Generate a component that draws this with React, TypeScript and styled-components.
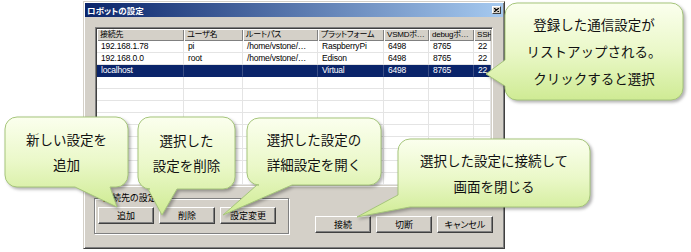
import React from "react";
import styled, { createGlobalStyle } from "styled-components";

const UI_FONT = `"Liberation Sans", "Noto Sans CJK JP", sans-serif`;
const JP_FONT = `"Noto Sans CJK JP", sans-serif`;

const GlobalStyle = createGlobalStyle`
  html, body {
    margin: 0;
    padding: 0;
    background: #fff;
  }
  body {
    width: 691px;
    height: 252px;
    overflow: hidden;
  }
`;

const Page = styled.div`
  position: relative;
  width: 691px;
  height: 252px;
  box-sizing: border-box;
  padding: 1px 0 0 83px;
  font-family: ${UI_FONT};
`;

const Dialog = styled.div`
  width: 422px;
  box-sizing: border-box;
  background: #d4d0c8;
  border: 1px solid;
  border-color: #d4d0c8 #404040 #404040 #d4d0c8;
  box-shadow: inset 1px 1px 0 #fff, inset -1px -1px 0 #808080;
  padding: 1px;
  display: flex;
  flex-direction: column;
`;

const TitleBar = styled.div`
  height: 14px;
  display: flex;
  align-items: center;
  justify-content: space-between;
  padding: 0 2px;
  background: linear-gradient(to right, #0a246a, #a6caf0);
`;

const TitleText = styled.span`
  color: #fff;
  font-family: ${JP_FONT};
  font-weight: bold;
  font-size: 8.5px;
  font-feature-settings: "palt";
`;

const CloseButton = styled.span`
  width: 9px;
  height: 8px;
  box-sizing: border-box;
  background: #d4d0c8;
  border: 1px solid;
  border-color: #fff #404040 #404040 #fff;
  display: flex;
  align-items: center;
  justify-content: center;
`;

const Body = styled.div`
  padding: 10px 10px 13px 10px;
  display: flex;
  flex-direction: column;
  gap: 11px;
`;

const ListView = styled.div`
  height: 160px;
  box-sizing: border-box;
  background: #fff;
  border: 1px solid;
  border-color: #808080 #fff #fff #808080;
  box-shadow: inset 1px 1px 0 #404040, inset -1px -1px 0 #d4d0c8;
  padding: 1px;
  overflow: hidden;
`;

const Grid = styled.div`
  display: grid;
  grid-template-columns: 87px 59px 75px 66px 45px 45px 1fr;
  grid-auto-rows: 12px;
`;

const HeadCell = styled.div`
  box-sizing: border-box;
  background: #d4d0c8;
  box-shadow: inset 1px 1px 0 #fff, inset -1px -1px 0 #808080;
  padding-left: 3px;
  font-family: ${UI_FONT};
  font-feature-settings: "palt";
  font-size: 8px;
  letter-spacing: -0.2px;
  line-height: 12px;
  color: #000;
  white-space: nowrap;
  overflow: hidden;
`;

const Cell = styled.div<{ $selected?: boolean }>`
  box-sizing: border-box;
  background: ${(p) => (p.$selected ? "#0a246a" : "#fff")};
  color: ${(p) => (p.$selected ? "#fff" : "#000")};
  border-right: 1px solid ${(p) => (p.$selected ? "#3b4f86" : "#e4e4e4")};
  border-bottom: 1px solid ${(p) => (p.$selected ? "#0a246a" : "#e4e4e4")};
  padding-left: 4px;
  font-size: 8.5px;
  letter-spacing: -0.2px;
  line-height: 11px;
  white-space: nowrap;
  overflow: hidden;
`;

const Footer = styled.div`
  display: flex;
  justify-content: space-between;
  align-items: flex-end;
`;

const GroupBox = styled.div`
  position: relative;
  margin-left: -1px;
  width: 195px;
  height: 36px;
  box-sizing: border-box;
  border: 1px solid #808080;
  box-shadow: inset 1px 1px 0 #fff, 1px 1px 0 #fff;
  padding: 8px 0 0 3px;
  display: flex;
  gap: 5px;
`;

const GroupLabel = styled.span`
  position: absolute;
  top: -7px;
  left: 7px;
  padding: 0 1px;
  background: #d4d0c8;
  font-family: ${JP_FONT};
  font-feature-settings: "palt";
  font-size: 9px;
  line-height: 12px;
  color: #000;
`;

const ButtonRow = styled.div`
  display: flex;
  gap: 5px;
  margin-bottom: 1px;
`;

const Button = styled.button`
  width: 56px;
  height: 17px;
  box-sizing: border-box;
  margin: 0;
  padding: 0;
  background: #d4d0c8;
  border: 1px solid;
  border-color: #fff #404040 #404040 #fff;
  box-shadow: inset -1px -1px 0 #808080;
  font-family: ${JP_FONT};
  font-feature-settings: "palt";
  font-size: 9px;
  line-height: 1;
  color: #000;
`;

type Tail =
  | { edge: "left"; from: number; to: number; tip: [number, number] }
  | { edge: "bottom"; from: number; to: number; tip: [number, number] }
  | { edge: "corner"; x: number; y: number; tip: [number, number] };

// rounded box with a pointer, drawn clockwise from the top-left corner
function bubblePath(w: number, h: number, r: number, t: Tail) {
  const arc = `A ${r} ${r} 0 0 1`;
  const tip = `${t.tip[0]} ${t.tip[1]}`;
  let d = `M ${r} 0 H ${w - r} ${arc} ${w} ${r} V ${h - r} ${arc} ${w - r} ${h}`;
  if (t.edge === "bottom") {
    d += ` H ${t.to} L ${tip} L ${t.from} ${h} H ${r} ${arc} 0 ${h - r}`;
  } else if (t.edge === "corner") {
    d += ` H ${t.x} L ${tip} L 0 ${t.y}`;
  } else {
    d += ` H ${r} ${arc} 0 ${h - r}`;
  }
  if (t.edge === "left") {
    d += ` V ${t.to} L ${tip} L 0 ${t.from}`;
  }
  d += ` V ${r} ${arc} ${r} 0 Z`;
  return d;
}

const BubbleWrap = styled.div<{ $x: number; $y: number; $w: number; $h: number }>`
  position: absolute;
  left: ${(p) => p.$x}px;
  top: ${(p) => p.$y}px;
  width: ${(p) => p.$w}px;
  height: ${(p) => p.$h}px;
`;

const BubbleShape = styled.svg`
  position: absolute;
  left: 0;
  top: 0;
  overflow: visible;
  filter: drop-shadow(2px 2px 1.5px rgba(0, 0, 0, 0.3));
`;

const BubbleText = styled.div<{ $lh: number }>`
  position: relative;
  height: 100%;
  display: flex;
  flex-direction: column;
  align-items: center;
  justify-content: center;
  font-family: ${JP_FONT};
  font-size: 13.5px;
  line-height: ${(p) => p.$lh}px;
  color: #111;
  white-space: nowrap;
`;

type Note = {
  id: string;
  x: number;
  y: number;
  w: number;
  h: number;
  lh: number;
  tail: Tail;
  lines: string[];
};

const notes: Note[] = [
  {
    id: "list",
    x: 505, y: 3, w: 178, h: 97, lh: 27,
    tail: { edge: "left", from: 57, to: 83, tip: [-19, 71] },
    lines: ["登録した通信設定が", "リストアップされる。", "クリックすると選択"],
  },
  {
    id: "add",
    x: 5, y: 117, w: 123, h: 70, lh: 25,
    tail: { edge: "bottom", from: 70, to: 105, tip: [112, 90] },
    lines: ["新しい設定を", "追加"],
  },
  {
    id: "del",
    x: 138, y: 117, w: 97, h: 72, lh: 25,
    tail: { edge: "bottom", from: 10, to: 39, tip: [24, 98] },
    lines: ["選択した", "設定を削除"],
  },
  {
    id: "edit",
    x: 247, y: 118, w: 134, h: 67, lh: 25,
    tail: { edge: "bottom", from: 10, to: 45, tip: [-24, 97] },
    lines: ["選択した設定の", "詳細設定を開く"],
  },
  {
    id: "conn",
    x: 398, y: 139, w: 192, h: 68, lh: 26,
    tail: { edge: "corner", x: 12, y: 56, tip: [-41, 78] },
    lines: ["選択した設定に接続して", "画面を閉じる"],
  },
];

const Callout: React.FC<{ note: Note }> = ({ note }) => {
  const gid = `grad-${note.id}`;
  return (
    <BubbleWrap $x={note.x} $y={note.y} $w={note.w} $h={note.h}>
      <BubbleShape width={note.w} height={note.h}>
        <defs>
          <linearGradient id={gid} x1="0" y1="0" x2="0" y2="1">
            <stop offset="0" stopColor="#fbffee" />
            <stop offset="0.5" stopColor="#eaf8c8" />
            <stop offset="1" stopColor="#cfeb94" />
          </linearGradient>
        </defs>
        <path
          d={bubblePath(note.w, note.h, 12, note.tail)}
          fill={`url(#${gid})`}
          stroke="#a5c57a"
          strokeWidth="1"
        />
      </BubbleShape>
      <BubbleText $lh={note.lh}>
        {note.lines.map((line, i) => (
          <span key={`line-${i}`}>{line}</span>
        ))}
      </BubbleText>
    </BubbleWrap>
  );
};

const headers = ["接続先", "ユーザ名", "ルートパス", "プラットフォーム", "VSMDポ…", "debugポ…", "SSH"];

const rows = [
  ["192.168.1.78", "pi", "/home/vstone/…", "RaspberryPi", "6498", "8765", "22"],
  ["192.168.0.0", "root", "/home/vstone/…", "Edison", "6498", "8765", "22"],
  ["localhost", "", "", "Virtual", "6498", "8765", "22"],
];
const selectedRow = 2;
const emptyRows = 9;

const App: React.FC = () => {
  return (
    <Page>
      <GlobalStyle />
      <Dialog>
        <TitleBar>
          <TitleText>ロボットの設定</TitleText>
          <CloseButton>
            <svg width="5" height="4" viewBox="0 0 5 4">
              <path d="M0 0 L5 4 M5 0 L0 4" stroke="#000" strokeWidth="1.2" />
            </svg>
          </CloseButton>
        </TitleBar>
        <Body>
          <ListView>
            <Grid>
              {headers.map((h, i) => (
                <HeadCell key={`head-${i}`}>{h}</HeadCell>
              ))}
              {rows.map((row, r) =>
                row.map((val, c) => (
                  <Cell key={`cell-${r}-${c}`} $selected={r === selectedRow}>
                    {val}
                  </Cell>
                ))
              )}
              {Array.from({ length: emptyRows * headers.length }).map((_, i) => (
                <Cell key={`empty-${i}`} />
              ))}
            </Grid>
          </ListView>
          <Footer>
            <GroupBox>
              <GroupLabel>接続先の設定</GroupLabel>
              <Button>追加</Button>
              <Button>削除</Button>
              <Button>設定変更</Button>
            </GroupBox>
            <ButtonRow>
              <Button>接続</Button>
              <Button>切断</Button>
              <Button>キャンセル</Button>
            </ButtonRow>
          </Footer>
        </Body>
      </Dialog>
      {notes.map((n) => (
        <Callout key={n.id} note={n} />
      ))}
    </Page>
  );
};

export default App;
